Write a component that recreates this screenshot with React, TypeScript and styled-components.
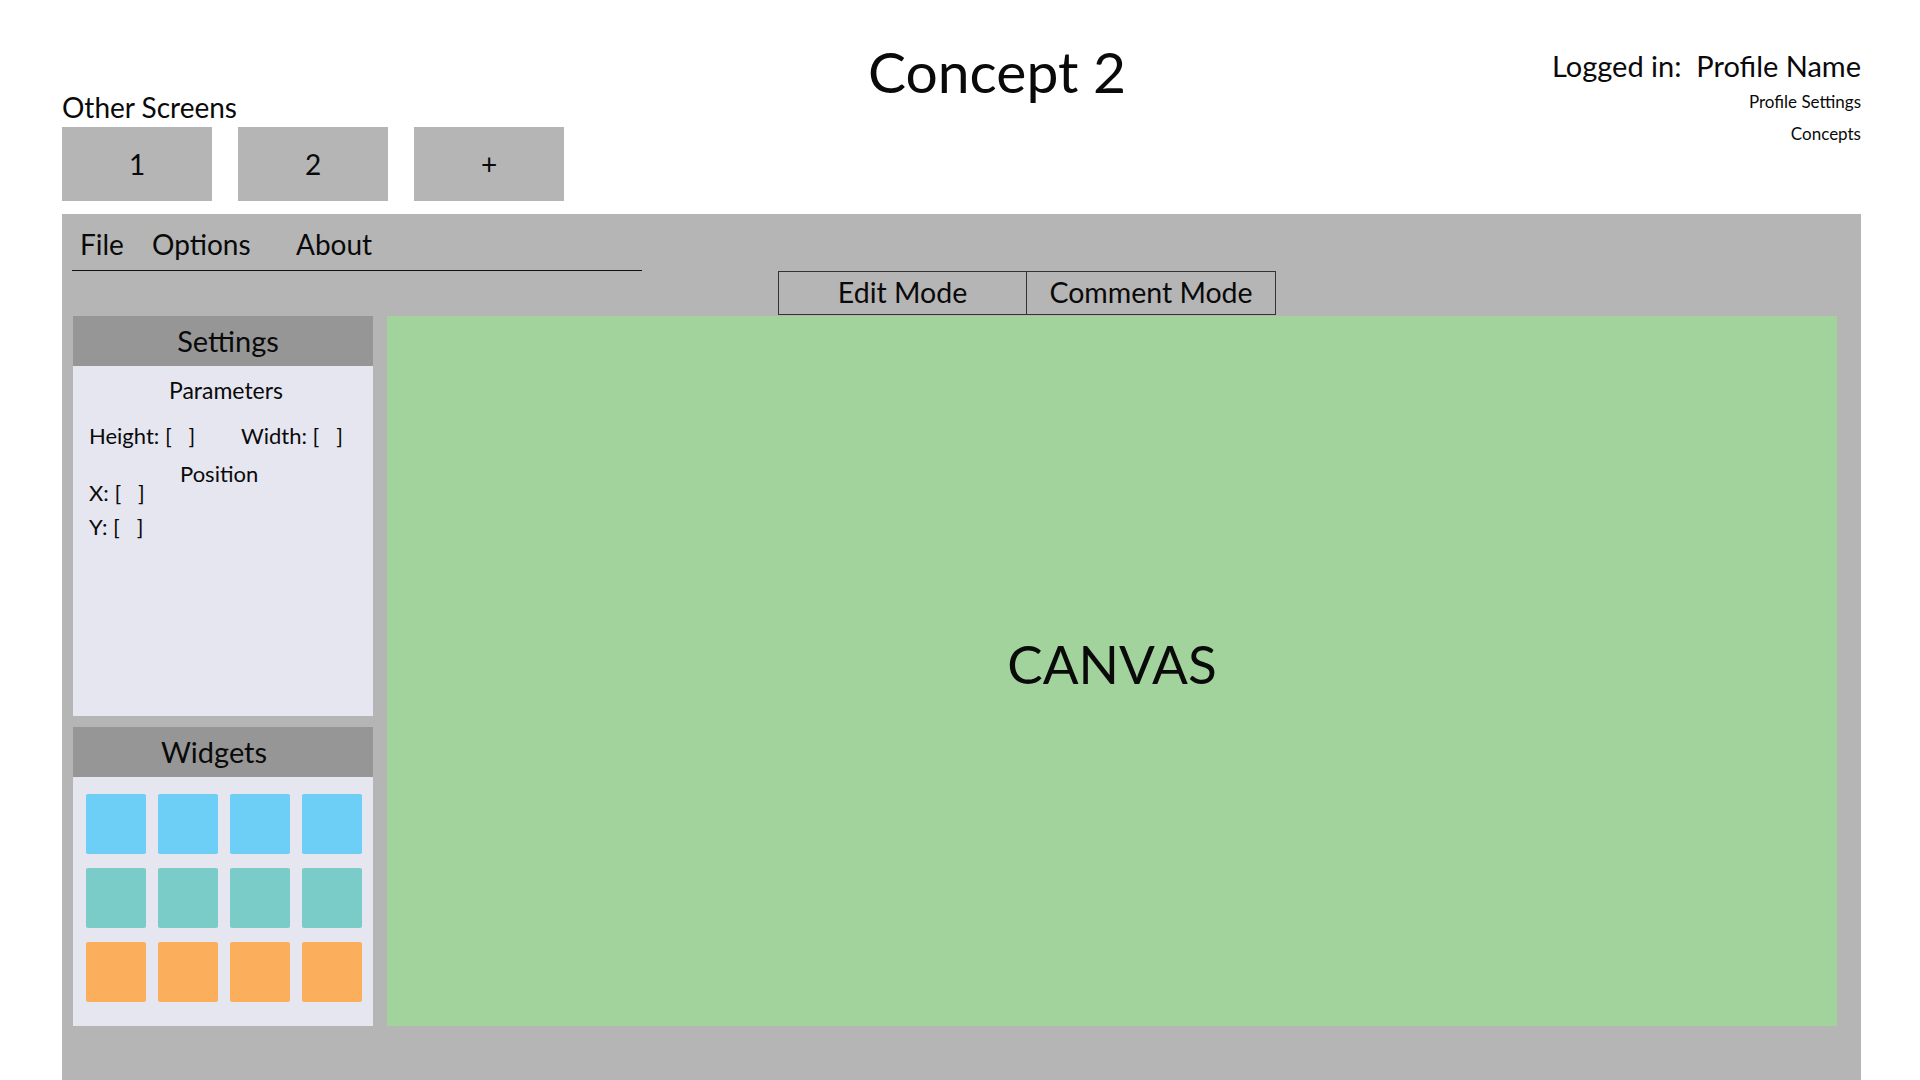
import React from 'react'
import styled, { createGlobalStyle } from 'styled-components'

const GlobalStyle = createGlobalStyle`
  html, body {
    margin: 0;
    padding: 0;
    background: #ffffff;
    overflow: hidden;
  }
  body {
    font-family: Lato, "Liberation Sans", sans-serif;
    color: #0a0a0a;
  }
`

const Page = styled.div`
  width: 1920px;
  height: 1080px;
  padding: 0 59px 0 62px;
  box-sizing: border-box;
  display: flex;
  flex-direction: column;
`

const Header = styled.header`
  height: 214px;
  display: flex;
  align-items: flex-start;
`

const ScreensBlock = styled.div`
  align-self: flex-end;
  margin-bottom: 13px;
  width: 502px;
`

const ScreensLabel = styled.div`
  font-size: 28px;
  line-height: 28px;
  margin-bottom: 6px;
`

const ScreensRow = styled.div`
  display: flex;
  gap: 26px;
`

const ScreenButton = styled.div`
  width: 150px;
  height: 74px;
  background: #b5b5b5;
  display: flex;
  align-items: center;
  justify-content: center;
  font-size: 28px;
`

const Title = styled.h1`
  flex: 1;
  margin: 43px 0 0;
  padding-right: 122px;
  text-align: center;
  font-size: 57px;
  line-height: 57px;
  font-weight: 400;
`

const Account = styled.div`
  margin-top: 51px;
  display: flex;
  flex-direction: column;
  align-items: flex-end;
`

const LoggedIn = styled.div`
  font-size: 29px;
  line-height: 29px;
  white-space: pre;
`

const AccountLink = styled.div<{ $top: number }>`
  font-size: 17px;
  line-height: 17px;
  margin-top: ${p => p.$top}px;
`

const MainPanel = styled.main`
  flex: 1;
  background: #b5b5b5;
  display: flex;
  flex-direction: column;
`

const MenuBar = styled.nav`
  margin-left: 10px;
  width: 570px;
  padding: 17px 0 12px 8px;
  box-sizing: border-box;
  border-bottom: 1px solid #111;
  display: grid;
  grid-template-columns: 72px 144px auto;
`

const MenuItem = styled.span`
  font-size: 28px;
  line-height: 27px;
`

const ModeRow = styled.div`
  margin-left: 716px;
  display: flex;
`

const ModeButton = styled.div<{ $first?: boolean }>`
  width: 249px;
  height: 44px;
  box-sizing: border-box;
  border: 1px solid #333;
  border-left-width: ${p => (p.$first ? 1 : 0)}px;
  display: flex;
  align-items: center;
  justify-content: center;
  padding-bottom: 2px;
  font-size: 28.5px;
`

const Workspace = styled.div`
  margin: 1px 0 0 11px;
  display: flex;
  gap: 14px;
  height: 710px;
`

const Sidebar = styled.aside`
  width: 300px;
  display: flex;
  flex-direction: column;
  gap: 11px;
`

const Panel = styled.section<{ $height: number }>`
  height: ${p => p.$height}px;
  display: flex;
  flex-direction: column;
  background: #e6e6f0;
`

const PanelHeader = styled.div<{ $shift: number }>`
  height: 50px;
  flex-shrink: 0;
  background: #969696;
  text-align: center;
  font-size: 29px;
  line-height: 50px;
  padding-left: ${p => Math.max(p.$shift, 0) * 2}px;
  padding-right: ${p => Math.max(-p.$shift, 0) * 2}px;
`

const SettingsBody = styled.div`
  padding: 13px 16px 0;
  font-size: 22px;
  line-height: 22px;
`

const ParamTitle = styled.div`
  text-align: center;
  font-size: 23px;
  padding-left: 6px;
`

const SizeRow = styled.div`
  margin-top: 24px;
  display: grid;
  grid-template-columns: 152px auto;
`

const PositionTitle = styled.div`
  margin: 16px 0 0 91px;
`

const CoordRow = styled.div<{ $top: number }>`
  margin-top: ${p => p.$top}px;
`

const WidgetGrid = styled.div`
  padding: 17px 13px 0;
  display: grid;
  grid-template-columns: repeat(4, 60px);
  column-gap: 12px;
  row-gap: 14px;
`

const Widget = styled.div<{ $color: string }>`
  width: 60px;
  height: 60px;
  border-radius: 2px;
  background: ${p => p.$color};
`

const Canvas = styled.div`
  width: 1450px;
  background: #a2d39c;
  display: flex;
  align-items: center;
  justify-content: center;
  padding-bottom: 15px;
  box-sizing: border-box;
  font-size: 53px;
`

const widgetColors = ['#6dcff6', '#7accc8', '#fbae5c']
const gap = '\u00a0\u00a0\u00a0'

export default function App() {
  return (
    <>
      <GlobalStyle />
      <Page>
        <Header>
          <ScreensBlock>
            <ScreensLabel>Other Screens</ScreensLabel>
            <ScreensRow>
              <ScreenButton>1</ScreenButton>
              <ScreenButton>2</ScreenButton>
              <ScreenButton>+</ScreenButton>
            </ScreensRow>
          </ScreensBlock>
          <Title>Concept 2</Title>
          <Account>
            <LoggedIn>Logged in:  Profile Name</LoggedIn>
            <AccountLink $top={13}>Profile Settings</AccountLink>
            <AccountLink $top={15}>Concepts</AccountLink>
          </Account>
        </Header>

        <MainPanel>
          <MenuBar>
            <MenuItem>File</MenuItem>
            <MenuItem>Options</MenuItem>
            <MenuItem>About</MenuItem>
          </MenuBar>
          <ModeRow>
            <ModeButton $first>Edit Mode</ModeButton>
            <ModeButton>Comment Mode</ModeButton>
          </ModeRow>

          <Workspace>
            <Sidebar>
              <Panel $height={400}>
                <PanelHeader $shift={5}>Settings</PanelHeader>
                <SettingsBody>
                  <ParamTitle>Parameters</ParamTitle>
                  <SizeRow>
                    <span>Height: [{gap}]</span>
                    <span>Width: [{gap}]</span>
                  </SizeRow>
                  <PositionTitle>Position</PositionTitle>
                  <CoordRow $top={-3}>X: [{gap}]</CoordRow>
                  <CoordRow $top={12}>Y: [{gap}]</CoordRow>
                </SettingsBody>
              </Panel>
              <Panel $height={299}>
                <PanelHeader $shift={-9}>Widgets</PanelHeader>
                <WidgetGrid>
                  {widgetColors.flatMap((color, row) =>
                    [0, 1, 2, 3].map(col => <Widget key={`${row}-${col}`} $color={color} />)
                  )}
                </WidgetGrid>
              </Panel>
            </Sidebar>
            <Canvas>CANVAS</Canvas>
          </Workspace>
        </MainPanel>
      </Page>
    </>
  )
}
